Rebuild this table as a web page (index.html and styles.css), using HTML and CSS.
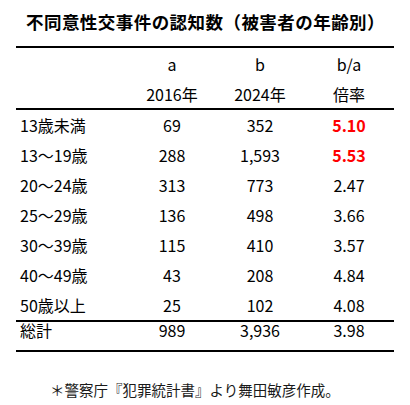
FILE: index.html
```html
<!DOCTYPE html>
<html lang="ja">
<head>
<meta charset="utf-8">
<link rel="stylesheet" href="styles.css">
</head>
<body>
<div class="page">
  <h1 class="title">不同意性交事件の認知数（被害者の年齢別）</h1>
  <table class="stats">
    <colgroup>
      <col class="c-label"><col class="c-num"><col class="c-num"><col class="c-ratio">
    </colgroup>
    <thead>
      <tr class="h1"><th></th><th>a</th><th>b</th><th>b/a</th></tr>
      <tr class="h2"><th></th><th>2016年</th><th>2024年</th><th>倍率</th></tr>
    </thead>
    <tbody>
      <tr><td class="label">13歳未満</td><td>69</td><td>352</td><td class="hot">5.10</td></tr>
      <tr><td class="label">13〜19歳</td><td>288</td><td>1,593</td><td class="hot">5.53</td></tr>
      <tr><td class="label">20〜24歳</td><td>313</td><td>773</td><td>2.47</td></tr>
      <tr><td class="label">25〜29歳</td><td>136</td><td>498</td><td>3.66</td></tr>
      <tr><td class="label">30〜39歳</td><td>115</td><td>410</td><td>3.57</td></tr>
      <tr><td class="label">40〜49歳</td><td>43</td><td>208</td><td>4.84</td></tr>
      <tr><td class="label">50歳以上</td><td>25</td><td>102</td><td>4.08</td></tr>
    </tbody>
    <tfoot>
      <tr><td class="label">総計</td><td>989</td><td>3,936</td><td>3.98</td></tr>
    </tfoot>
  </table>
  <p class="note">＊警察庁『犯罪統計書』より舞田敏彦作成。</p>
</div>
</body>
</html>
```

FILE: styles.css
```css
html, body {
  margin: 0;
  padding: 0;
  background: #ffffff;
}

body {
  font-family: "Noto Sans CJK JP", "Noto Sans", sans-serif;
  color: #000000;
}

.page {
  width: 410px;
  height: 405px;
  padding: 0 16px;
  box-sizing: border-box;
}

.title {
  margin: 0;
  padding: 12px 0 0 10px;
  height: 46px;
  box-sizing: border-box;
  font-size: 17.5px;
  line-height: 20px;
  font-weight: 700;
  letter-spacing: 0.45px;
  white-space: nowrap;
}

.stats {
  width: 378px;
  border-collapse: collapse;
  table-layout: fixed;
  border-top: 2px solid #000;
  border-bottom: 2px solid #000;
  font-size: 16px;
}

.c-label { width: 112px; }
.c-num { width: 88px; }
.c-ratio { width: 90px; }

.stats th,
.stats td {
  padding: 0;
  font-weight: 400;
  text-align: center;
  height: 30px;
  line-height: 20px;
  vertical-align: middle;
}

.stats thead tr.h1 th { height: 31px; padding-bottom: 1px; }
.stats thead tr.h2 th { height: 28px; }

.stats thead tr.h2 th {
  border-bottom: 2px solid #000;
}

.stats tfoot td {
  border-top: 2px solid #000;
  height: 28px;
  vertical-align: top;
  padding-top: 0;
  line-height: 16px;
}

.stats td.label {
  text-align: left;
  padding-left: 4px;
}

.stats td.hot {
  color: #ff0000;
  font-weight: 700;
}

.note {
  margin: 28px 0 0 34px;
  font-size: 14.5px;
  line-height: 20px;
  color: #1a1a1a;
  white-space: nowrap;
}
```
